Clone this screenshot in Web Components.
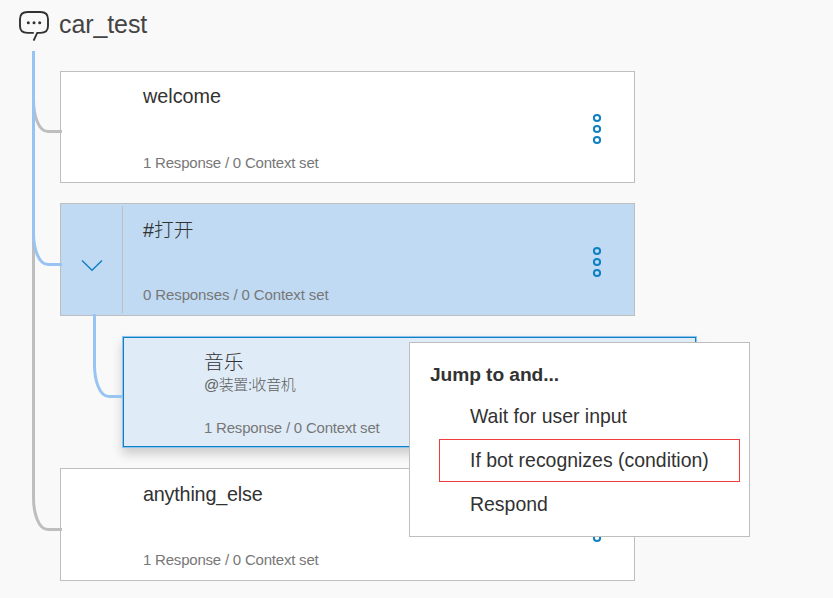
<!DOCTYPE html>
<html lang="en">
<head>
<meta charset="utf-8">
<title>car_test</title>
<style>
html,body{margin:0;width:833px;height:598px;overflow:hidden;background:#f9f9f9;color:#323232;font-family:"Liberation Sans","Noto Sans CJK SC",sans-serif}
</style>
</head>
<body>
<dialog-tree></dialog-tree>
<script>
class BotTitle extends HTMLElement {
  constructor(){
    super();
    this.attachShadow({mode:'open'}).innerHTML = `
    <style>
      :host{display:flex;height:51px;padding-left:18px;box-sizing:border-box}
      svg{flex:none;margin-top:9px}
      h1{margin:8px 0 0 9px;font-size:25px;line-height:32px;font-weight:300;letter-spacing:-.1px;color:#444;white-space:nowrap}
    </style>
    <svg width="32" height="34" fill="none" stroke="#323232" stroke-width="1.9">
      <path d="M15.8 23.9H9.5Q2 23.9 2 17V10Q2 3 9.5 3H22.5Q30 3 30 10V17Q30 23.9 22.5 23.9H19.2L15.6 31.6"/>
      <g fill="#323232" stroke="none"><circle cx="10.3" cy="13.7" r="1.5"/><circle cx="16" cy="13.7" r="1.5"/><circle cx="21.7" cy="13.7" r="1.5"/></g>
    </svg>
    <h1><slot></slot></h1>`;
  }
}
customElements.define('bot-title', BotTitle);

class MoreDots extends HTMLElement {
  constructor(){
    super();
    this.attachShadow({mode:'open'}).innerHTML = `
    <style>:host{display:block;width:10px;height:32px}svg{display:block}</style>
    <svg width="10" height="32" fill="none" stroke="#0f80c1" stroke-width="2"><circle cx="5" cy="5" r="3.1"/><circle cx="5" cy="16" r="3.1"/><circle cx="5" cy="27" r="3.1"/></svg>`;
  }
}
customElements.define('more-dots', MoreDots);

class DialogNode extends HTMLElement {
  constructor(){
    super();
    this.attachShadow({mode:'open'}).innerHTML = `
    <style>
      :host{display:grid;grid-template-columns:61px 1fr 42px;width:575px;height:112px;box-sizing:border-box;border:1px solid #bebebe;background:#fff}
      :host([tall]){height:113px}
      :host([open]){background:#c0daf3}
      :host([child]){margin-left:62px;background:#dfecf7;border-color:#8fc3ef;box-shadow:inset 0 0 0 1px #0f80c1,0 6px 10px rgba(0,0,0,.18)}
      .toggle{display:flex;align-items:center;justify-content:center;box-sizing:border-box;margin:2px 0;width:62px}
      :host([open]) .toggle{border-right:1px solid #bebebe}
      .toggle svg{display:none;margin-top:12px}
      :host([open]) .toggle svg{display:block}
      .text{display:flex;flex-direction:column;padding:11px 0 10px 21px;white-space:nowrap}
      :host([tall]) .text{padding:12px 0 11px 21px}
      :host([open]) .text{padding-top:13px}
      :host([child]) .text{padding:12px 0 10px 20px}
      .name{font-size:19.8px;line-height:26px;font-weight:300}
      :host([tall]:not([open])) .name{letter-spacing:-.2px}
      .cond{font-size:15px;line-height:20px;letter-spacing:-.45px;font-weight:300;color:#606060}
      .info{margin-top:auto;font-size:15px;line-height:18px;letter-spacing:-.21px;color:#777}
      :host([open]) .info{letter-spacing:-.11px}
      more-dots{margin-top:41px}
      :host([tall]) more-dots{margin-top:42px}
    </style>
    <div class="toggle"><svg width="22" height="13" fill="none" stroke="#0f80c1" stroke-width="1.4"><path d="M1 1.5L11 11.2L21 1.5"/></svg></div>
    <div class="text"><div class="name"><slot></slot></div><div class="cond"><slot name="condition"></slot></div><div class="info"><slot name="info"></slot></div></div>
    <more-dots></more-dots>`;
  }
}
customElements.define('dialog-node', DialogNode);

class TreeLines extends HTMLElement {
  constructor(){
    super();
    this.attachShadow({mode:'open'}).innerHTML = `
    <style>:host{display:block;pointer-events:none}svg{display:block}</style>
    <svg width="130" height="598" fill="none" stroke-width="3">
      <g stroke="#bebebe"><path d="M33.5 230V498C33.5 512 38 529.5 48 529.5H62"/><path d="M33.5 100C33.5 114 38 131.5 48 131.5H62"/></g>
      <g stroke="#97c4f2"><path d="M33.5 51V233C33.5 247 38 264.5 48 264.5H62"/><path d="M94.5 314V365C94.5 379 99 396.5 109 396.5H122"/></g>
    </svg>`;
  }
}
customElements.define('tree-lines', TreeLines);

class MenuOption extends HTMLElement {
  constructor(){
    super();
    this.attachShadow({mode:'open'}).innerHTML = `
    <style>
      :host{display:flex;align-items:center;height:43px;box-sizing:border-box;padding-left:30px;border:1px solid transparent;font-size:19.45px;white-space:nowrap}
      :host([marked]){border-color:#f03c3c}
    </style><slot></slot>`;
  }
}
customElements.define('menu-option', MenuOption);

class JumpMenu extends HTMLElement {
  constructor(){
    super();
    this.attachShadow({mode:'open'}).innerHTML = `
    <style>
      :host{display:block;width:341px;height:195px;box-sizing:border-box;padding:19px 9px 0 29px;border:1px solid #bebebe;background:#fff}
      h2{margin:0 0 7px -9px;font-size:19.2px;line-height:26px;letter-spacing:-.08px;white-space:nowrap}
      .list{display:grid;gap:1px}
    </style>
    <h2><slot name="heading"></slot></h2><div class="list"><slot></slot></div>`;
  }
}
customElements.define('jump-menu', JumpMenu);

class DialogTree extends HTMLElement {
  constructor(){
    super();
    this.attachShadow({mode:'open'}).innerHTML = `
    <style>
      :host{display:block;position:relative;width:833px;height:598px}
      .nodes{display:grid;gap:20px;padding:20px 0 0 60px;justify-items:start}
      tree-lines{position:absolute;left:0;top:0}
      jump-menu{position:absolute;left:409px;top:342px}
    </style>
    <bot-title>car_test</bot-title>
    <div class="nodes">
      <dialog-node>welcome<span slot="info">1 Response / 0 Context set</span></dialog-node>
      <dialog-node open tall>#打开<span slot="info">0 Responses / 0 Context set</span></dialog-node>
      <dialog-node child>音乐<span slot="condition">@装置:收音机</span><span slot="info">1 Response / 0 Context set</span></dialog-node>
      <dialog-node tall>anything_else<span slot="info">1 Response / 0 Context set</span></dialog-node>
    </div>
    <tree-lines></tree-lines>
    <jump-menu><span slot="heading">Jump to and...</span>
      <menu-option>Wait for user input</menu-option>
      <menu-option marked>If bot recognizes (condition)</menu-option>
      <menu-option>Respond</menu-option>
    </jump-menu>`;
  }
}
customElements.define('dialog-tree', DialogTree);
</script>
</body>
</html>
